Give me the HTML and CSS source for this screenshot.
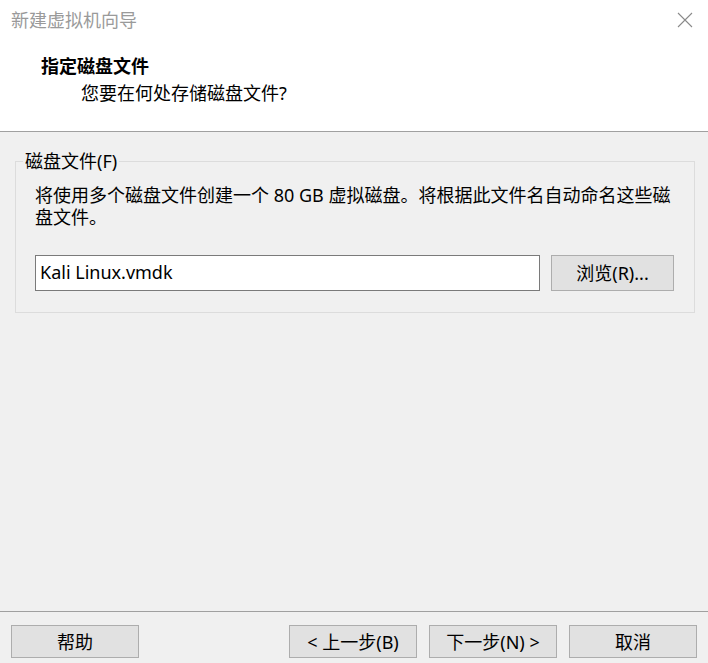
FILE: index.html
```html
<!DOCTYPE html>
<html lang="zh-CN">
<head>
<meta charset="utf-8">
<title>新建虚拟机向导</title>
<link rel="stylesheet" href="styles.css">
</head>
<body>
<div class="window">
  <header class="header">
    <div class="titlebar">
      <span class="title">新建虚拟机向导</span>
      <svg class="close" width="16" height="16" viewBox="0 0 16 16"><path d="M1 1 L15 15 M15 1 L1 15" stroke="#8a8a8a" stroke-width="1.1" fill="none"/></svg>
    </div>
    <div class="heading">指定磁盘文件</div>
    <div class="subheading">您要在何处存储磁盘文件?</div>
  </header>
  <main class="main">
    <fieldset class="group">
      <legend class="legend">磁盘文件(F)</legend>
      <div class="group-body">
        <p class="desc">将使用多个磁盘文件创建一个 80 GB 虚拟磁盘。将根据此文件名自动命名这些磁盘文件。</p>
        <div class="file-row">
          <div class="input">Kali Linux.vmdk</div>
          <div class="btn browse">浏览(R)...</div>
        </div>
      </div>
    </fieldset>
  </main>
  <footer class="footer">
    <div class="btn">帮助</div>
    <div class="nav">
      <div class="btn">&lt; 上一步(B)</div>
      <div class="btn">下一步(N) &gt;</div>
      <div class="btn">取消</div>
    </div>
  </footer>
</div>
</body>
</html>
```
FILE: styles.css
```css
* { box-sizing: border-box; }
html, body { margin: 0; padding: 0; }
body {
  width: 708px;
  height: 663px;
  background: #f0f0f0;
  font-family: "Noto Sans", "Noto Sans CJK SC", sans-serif;
  font-size: 18px;
  color: #000;
  overflow: hidden;
}
.window {
  display: flex;
  flex-direction: column;
  height: 663px;
}
.header {
  background: #fff;
  height: 132px;
  border-bottom: 1px solid #a0a0a0;
  flex: none;
}
.titlebar {
  height: 40px;
  display: flex;
  align-items: center;
  justify-content: space-between;
  padding: 0 15px 0 11px;
}
.title {
  color: #9a9a9a;
  font-size: 18px;
  line-height: 40px;
}
.close { display: block; margin-top: -1px; }
.heading {
  margin-top: 14px;
  padding-left: 41px;
  line-height: 24px;
  font-weight: bold;
}
.subheading {
  margin-top: 3px;
  padding-left: 81px;
  line-height: 24px;
}
.main {
  flex: 1;
  padding: 18px 13px 0 15px;
}
.group {
  margin: 0;
  border: 1px solid #dcdcdc;
  padding: 0 20px 21px 7px;
  min-width: 0;
}
.legend {
  padding: 0 2px;
  line-height: 22px;
}
.group-body {
  padding-left: 12px;
}
.desc {
  margin: 12px 0 0;
  width: 640px;
  line-height: 22px;
}
.file-row {
  margin-top: 27px;
  display: flex;
  gap: 11px;
}
.input {
  width: 505px;
  height: 36px;
  background: #fff;
  border: 1px solid #7a7a7a;
  padding-left: 4px;
  line-height: 32px;
}
.btn {
  width: 128px;
  height: 33px;
  background: #e1e1e1;
  border: 1px solid #adadad;
  display: flex;
  align-items: center;
  justify-content: center;
  line-height: 1;
}
.browse {
  width: 123px;
  height: 36px;
}
.footer {
  flex: none;
  height: 52px;
  border-top: 1px solid #a0a0a0;
  padding: 13px 11px 0 11px;
  display: flex;
  justify-content: space-between;
  align-items: flex-start;
}
.nav {
  display: flex;
  gap: 12px;
}
```
